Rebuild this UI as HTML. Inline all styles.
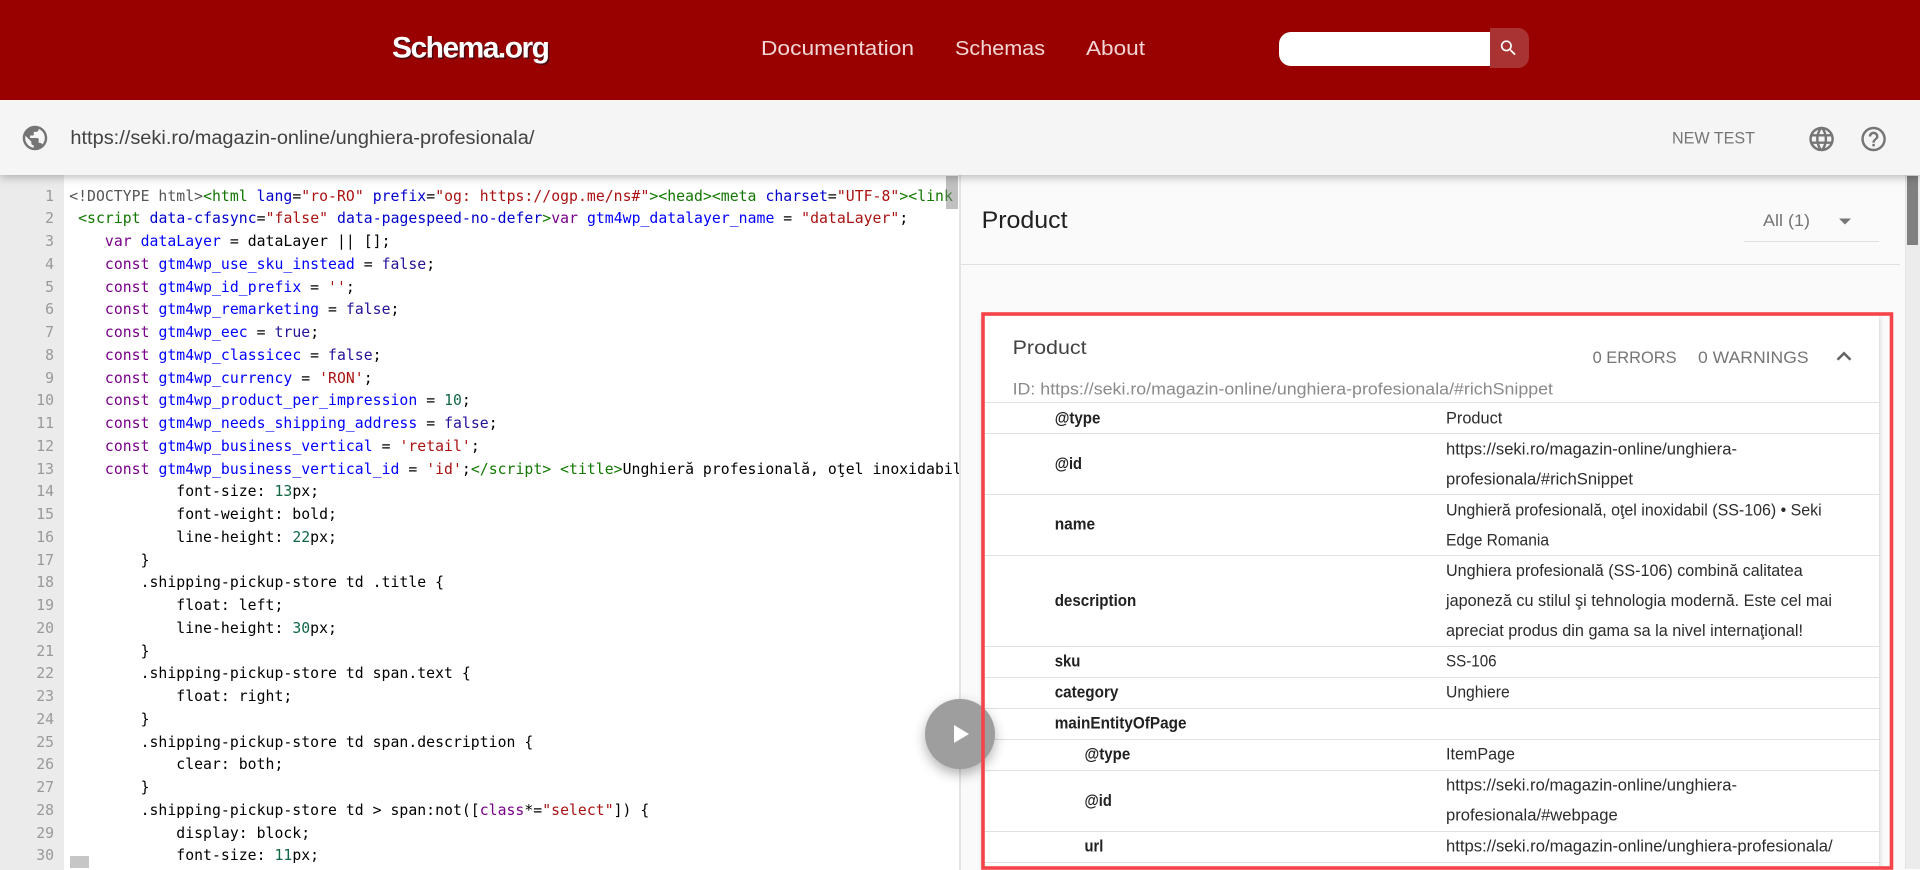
<!DOCTYPE html>
<html lang="en"><head><meta charset="UTF-8"><title>Schema.org</title>
<style>
html,body{margin:0;padding:0;width:1920px;height:870px;overflow:hidden;background:#fff}
body{position:relative;font-family:"Liberation Sans",sans-serif}
.a{position:absolute}
#hdr{left:0;top:0;width:1920px;height:100px;background:#990000;z-index:5}
#search{left:1279px;top:32px;width:211px;height:34px;background:#fff;border-radius:12px 0 0 12px}
#sbtn{left:1490px;top:28px;width:39px;height:40px;background:#a93333;border-radius:0 11px 11px 0}
#bar{left:0;top:100px;width:1920px;height:75px;background:#f5f5f5;box-shadow:0 2px 9px rgba(0,0,0,.28);z-index:4}
#gut{left:0;top:175px;width:64px;height:695px;background:#ebebeb}
#nums,#code{margin:0;font:14.78px/22.75px "DejaVu Sans Mono",monospace;white-space:pre}
#code{letter-spacing:.035px}
#nums{left:0;top:185.5px;width:54px;text-align:right;color:#999}
#cwrap{left:64px;top:175px;width:895px;height:695px;overflow:hidden}
#code{left:5.2px;top:10.5px;color:#000}
.t{color:#170}.at{color:#00c}.s{color:#a11}.k{color:#708}.d{color:#00f}.n{color:#164}.m{color:#555}.b{color:#219}
#vth{left:946px;top:176px;width:12px;height:33px;background:rgba(130,130,130,.5)}
#hth{left:70px;top:856px;width:19px;height:12px;background:#c6c6c6}
#right{left:959px;top:175px;width:946px;height:695px;background:#fafafa;border-left:2px solid #e4e4e4;box-sizing:border-box}
#hr1{left:961px;top:264px;width:939px;height:1px;background:#e0e0e0}
#sel{left:1744px;top:241px;width:135px;height:1px;background:#e0e0e0}
#track{left:1905px;top:175px;width:15px;height:694px;background:#ececec;border-left:1px solid #e2e2e2;box-sizing:border-box}
#thumb{left:1907px;top:176px;width:11px;height:69px;background:#808080}
#card{left:983px;top:316px;width:896px;height:554px;background:#fff;box-shadow:0 1px 5px rgba(0,0,0,.22)}
.l{position:absolute;left:985px;width:894px;height:1px;background:#e0e0e0}
#play{left:925px;top:699px;width:70px;height:70px;border-radius:50%;background:#9e9e9e;box-shadow:0 5px 12px rgba(0,0,0,.3);z-index:2}
#ov{left:0;top:0;width:1920px;height:870px;z-index:6;pointer-events:none}
text{font-family:"Liberation Sans",sans-serif;font-size:17px}
.lb{font-weight:700;font-size:16.5px;fill:#212121}
.v{fill:#2c2c2c}
</style></head><body>
<div class="a" id="hdr"><div class="a" id="search"></div><div class="a" id="sbtn"></div></div>
<div class="a" id="bar"></div>
<div class="a" id="gut"></div>
<pre class="a" id="nums">1
2
3
4
5
6
7
8
9
10
11
12
13
14
15
16
17
18
19
20
21
22
23
24
25
26
27
28
29
30</pre>
<div class="a" id="cwrap"><pre class="a" id="code"><span class="m">&lt;!DOCTYPE html&gt;</span><span class="t">&lt;html</span> <span class="at">lang</span>=<span class="s">"ro-RO"</span> <span class="at">prefix</span>=<span class="s">"og: https://ogp.me/ns#"</span><span class="t">&gt;&lt;head&gt;&lt;meta</span> <span class="at">charset</span>=<span class="s">"UTF-8"</span><span class="t">&gt;&lt;link</span>
 <span class="t">&lt;script</span> <span class="at">data-cfasync</span>=<span class="s">"false"</span> <span class="at">data-pagespeed-no-defer</span><span class="t">&gt;</span><span class="k">var</span> <span class="d">gtm4wp_datalayer_name</span> = <span class="s">"dataLayer"</span>;
    <span class="k">var</span> <span class="d">dataLayer</span> = dataLayer || [];
    <span class="k">const</span> <span class="d">gtm4wp_use_sku_instead</span> = <span class="b">false</span>;
    <span class="k">const</span> <span class="d">gtm4wp_id_prefix</span> = <span class="s">''</span>;
    <span class="k">const</span> <span class="d">gtm4wp_remarketing</span> = <span class="b">false</span>;
    <span class="k">const</span> <span class="d">gtm4wp_eec</span> = <span class="b">true</span>;
    <span class="k">const</span> <span class="d">gtm4wp_classicec</span> = <span class="b">false</span>;
    <span class="k">const</span> <span class="d">gtm4wp_currency</span> = <span class="s">'RON'</span>;
    <span class="k">const</span> <span class="d">gtm4wp_product_per_impression</span> = <span class="n">10</span>;
    <span class="k">const</span> <span class="d">gtm4wp_needs_shipping_address</span> = <span class="b">false</span>;
    <span class="k">const</span> <span class="d">gtm4wp_business_vertical</span> = <span class="s">'retail'</span>;
    <span class="k">const</span> <span class="d">gtm4wp_business_vertical_id</span> = <span class="s">'id'</span>;<span class="t">&lt;/script&gt;</span> <span class="t">&lt;title&gt;</span>Unghieră profesională, oţel inoxidabil (SS-106)
            font-size: <span class="n">13</span>px;
            font-weight: bold;
            line-height: <span class="n">22</span>px;
        }
        .shipping-pickup-store td .title {
            float: left;
            line-height: <span class="n">30</span>px;
        }
        .shipping-pickup-store td span.text {
            float: right;
        }
        .shipping-pickup-store td span.description {
            clear: both;
        }
        .shipping-pickup-store td &gt; span:not([<span class="k">class</span>*=<span class="s">"select"</span>]) {
            display: block;
            font-size: <span class="n">11</span>px;</pre></div>
<div class="a" id="vth"></div>
<div class="a" id="hth"></div>
<div class="a" id="right"></div>
<div class="a" id="hr1"></div>
<div class="a" id="sel"></div>
<div class="a" id="track"></div>
<div class="a" id="thumb"></div>
<div class="a" id="card"></div>
<div class="l" style="top:402px"></div><div class="l" style="top:433px"></div><div class="l" style="top:494px"></div><div class="l" style="top:555px"></div><div class="l" style="top:646px"></div><div class="l" style="top:677px"></div><div class="l" style="top:708px"></div><div class="l" style="top:739px"></div><div class="l" style="top:770px"></div><div class="l" style="top:831px"></div><div class="l" style="top:862px"></div>
<div class="a" id="play"><svg width="70" height="70" style="display:block"><polygon points="29,26 44,35 29,44" fill="#fff"/></svg></div>
<svg class="a" id="ov" width="1920" height="870" viewBox="0 0 1920 870">
<text x="393.5" y="59" textLength="158" lengthAdjust="spacing" style="font-size:30px;font-weight:700;fill:#4a0a10">Schema.org</text>
<text x="392" y="57.5" textLength="158" lengthAdjust="spacing" style="font-size:30px;font-weight:700;fill:#fff">Schema.org</text>
<g fill="#f2d6d6">
<text x="761" y="55" textLength="153" lengthAdjust="spacingAndGlyphs" style="font-size:20.5px">Documentation</text>
<text x="955" y="55" textLength="90" lengthAdjust="spacingAndGlyphs" style="font-size:20.5px">Schemas</text>
<text x="1086" y="55" textLength="59" lengthAdjust="spacingAndGlyphs" style="font-size:20.5px">About</text>
</g>
<g transform="translate(1498.3,37.8) scale(.85)" fill="#fff"><path d="M15.5 14h-.79l-.28-.27C15.41 12.59 16 11.11 16 9.5 16 5.91 13.09 3 9.5 3S3 5.91 3 9.5 5.91 16 9.5 16c1.61 0 3.09-.59 4.23-1.57l.27.28v.79l5 4.99L20.49 19l-4.99-5zm-6 0C7.01 14 5 11.99 5 9.5S7.01 5 9.5 5 14 7.01 14 9.5 11.99 14 9.5 14z"/></g>
<g transform="translate(20.3,123.3) scale(1.2245)" fill="#757575"><path d="M12 2C6.48 2 2 6.48 2 12s4.48 10 10 10 10-4.48 10-10S17.52 2 12 2zm-1 17.93c-3.95-.49-7-3.85-7-7.93 0-.62.08-1.21.21-1.79L9 15v1c0 1.1.9 2 2 2v1.93zm6.9-2.54c-.26-.81-1-1.39-1.9-1.39h-1v-3c0-.55-.45-1-1-1H8v-2h2c.55 0 1-.45 1-1V7h2c1.1 0 2-.9 2-2v-.41c2.93 1.19 5 4.06 5 7.41 0 2.08-.8 3.97-2.1 5.39z"/></g>
<text x="70.4" y="144" textLength="464" lengthAdjust="spacingAndGlyphs" style="font-size:19.6px" fill="#424242">https://seki.ro/magazin-online/unghiera-profesionala/</text>
<text x="1672" y="143.5" textLength="83" lengthAdjust="spacingAndGlyphs" style="font-size:17px" fill="#757575">NEW TEST</text>
<g transform="translate(1806.9,124.3) scale(1.2245)" fill="#757575"><path d="M11.99 2C6.47 2 2 6.48 2 12s4.47 10 9.99 10C17.52 22 22 17.52 22 12S17.52 2 11.99 2zm6.93 6h-2.95c-.32-1.25-.78-2.45-1.38-3.56 1.84.63 3.37 1.91 4.33 3.56zM12 4.04c.83 1.2 1.48 2.53 1.91 3.96h-3.82c.43-1.43 1.08-2.76 1.91-3.96zM4.26 14C4.1 13.36 4 12.69 4 12s.1-1.36.26-2h3.38c-.08.66-.14 1.32-.14 2 0 .68.06 1.34.14 2H4.26zm.82 2h2.95c.32 1.25.78 2.45 1.38 3.56-1.84-.63-3.37-1.9-4.33-3.56zm2.95-8H5.08c.96-1.66 2.49-2.93 4.33-3.56C8.81 5.55 8.35 6.75 8.03 8zM12 19.96c-.83-1.2-1.48-2.53-1.91-3.96h3.82c-.43 1.43-1.08 2.76-1.91 3.96zM14.34 14H9.66c-.09-.66-.16-1.32-.16-2 0-.68.07-1.35.16-2h4.68c.09.65.16 1.32.16 2 0 .68-.07 1.34-.16 2zm.25 5.56c.6-1.11 1.06-2.31 1.38-3.56h2.95c-.96 1.65-2.49 2.93-4.33 3.56zM16.36 14c.08-.66.14-1.32.14-2 0-.68-.06-1.34-.14-2h3.38c.16.64.26 1.31.26 2s-.1 1.36-.26 2h-3.38z"/></g>
<g transform="translate(1858.9,124.3) scale(1.2245)" fill="#757575"><path d="M11 18h2v-2h-2v2zm1-16C6.48 2 2 6.48 2 12s4.48 10 10 10 10-4.48 10-10S17.52 2 12 2zm0 18c-4.41 0-8-3.59-8-8s3.59-8 8-8 8 3.59 8 8-3.59 8-8 8zm0-14c-2.21 0-4 1.79-4 4h2c0-1.1.9-2 2-2s2 .9 2 2c0 2-3 1.75-3 5h2c0-2.25 3-2.5 3-5 0-2.21-1.79-4-4-4z"/></g>
<text x="981.6" y="228" textLength="86" lengthAdjust="spacingAndGlyphs" style="font-size:24.5px" fill="#212121">Product</text>
<text x="1763" y="226" textLength="47" lengthAdjust="spacingAndGlyphs" style="font-size:17px" fill="#757575">All (1)</text>
<polygon points="1839,218.5 1851,218.5 1845,224.5" fill="#757575"/>
<text x="1012.6" y="354" textLength="74" lengthAdjust="spacingAndGlyphs" style="font-size:19.6px" fill="#424242">Product</text>
<text x="1012.6" y="394.5" textLength="540.4" lengthAdjust="spacingAndGlyphs" fill="#8a8a8a">ID: https://seki.ro/magazin-online/unghiera-profesionala/#richSnippet</text>
<text x="1592.6" y="363" textLength="84" lengthAdjust="spacingAndGlyphs" fill="#757575">0 ERRORS</text>
<text x="1698" y="363" textLength="110.6" lengthAdjust="spacingAndGlyphs" fill="#757575">0 WARNINGS</text>
<g transform="translate(1829.3,341.7) scale(1.2245)" fill="#616161"><path d="M12 8l-6 6 1.41 1.41L12 10.83l4.59 4.58L18 14z"/></g>
<text class="lb" x="1054.7" y="423.5" textLength="45.7" lengthAdjust="spacingAndGlyphs">@type</text>
<text class="lb" x="1054.7" y="469" textLength="27.3" lengthAdjust="spacingAndGlyphs">@id</text>
<text class="lb" x="1054.7" y="529.5" textLength="40.4" lengthAdjust="spacingAndGlyphs">name</text>
<text class="lb" x="1054.7" y="606" textLength="81.6" lengthAdjust="spacingAndGlyphs">description</text>
<text class="lb" x="1054.7" y="666.5" textLength="25.7" lengthAdjust="spacingAndGlyphs">sku</text>
<text class="lb" x="1054.7" y="697.5" textLength="63.7" lengthAdjust="spacingAndGlyphs">category</text>
<text class="lb" x="1054.7" y="728.5" textLength="131.8" lengthAdjust="spacingAndGlyphs">mainEntityOfPage</text>
<text class="lb" x="1084.5" y="759.5" textLength="45.7" lengthAdjust="spacingAndGlyphs">@type</text>
<text class="lb" x="1084.5" y="806" textLength="27.3" lengthAdjust="spacingAndGlyphs">@id</text>
<text class="lb" x="1084.5" y="851.5" textLength="18.8" lengthAdjust="spacingAndGlyphs">url</text>
<text class="v" x="1446" y="423.5" textLength="56.3" lengthAdjust="spacingAndGlyphs">Product</text>
<text class="v" x="1446" y="454.5" textLength="291" lengthAdjust="spacingAndGlyphs">https://seki.ro/magazin-online/unghiera-</text>
<text class="v" x="1446" y="484.5" textLength="187" lengthAdjust="spacingAndGlyphs">profesionala/#richSnippet</text>
<text class="v" x="1446" y="515.5" textLength="375.7" lengthAdjust="spacingAndGlyphs">Unghieră profesională, oţel inoxidabil (SS-106) • Seki</text>
<text class="v" x="1446" y="545.5" textLength="103" lengthAdjust="spacingAndGlyphs">Edge Romania</text>
<text class="v" x="1446" y="576" textLength="356.7" lengthAdjust="spacingAndGlyphs">Unghiera profesională (SS-106) combină calitatea</text>
<text class="v" x="1446" y="606" textLength="386" lengthAdjust="spacingAndGlyphs">japoneză cu stilul şi tehnologia modernă. Este cel mai</text>
<text class="v" x="1446" y="636" textLength="357" lengthAdjust="spacingAndGlyphs">apreciat produs din gama sa la nivel internaţional!</text>
<text class="v" x="1446" y="666.5" textLength="50.6" lengthAdjust="spacingAndGlyphs">SS-106</text>
<text class="v" x="1446" y="697.5" textLength="63.7" lengthAdjust="spacingAndGlyphs">Unghiere</text>
<text class="v" x="1446" y="759.5" textLength="69" lengthAdjust="spacingAndGlyphs">ItemPage</text>
<text class="v" x="1446" y="790.5" textLength="291" lengthAdjust="spacingAndGlyphs">https://seki.ro/magazin-online/unghiera-</text>
<text class="v" x="1446" y="820.5" textLength="171.7" lengthAdjust="spacingAndGlyphs">profesionala/#webpage</text>
<text class="v" x="1446" y="851.5" textLength="386.7" lengthAdjust="spacingAndGlyphs">https://seki.ro/magazin-online/unghiera-profesionala/</text>
<rect x="983" y="314" width="908.5" height="554" fill="none" stroke="#f44449" stroke-width="3.6"/>
</svg>
</body></html>
